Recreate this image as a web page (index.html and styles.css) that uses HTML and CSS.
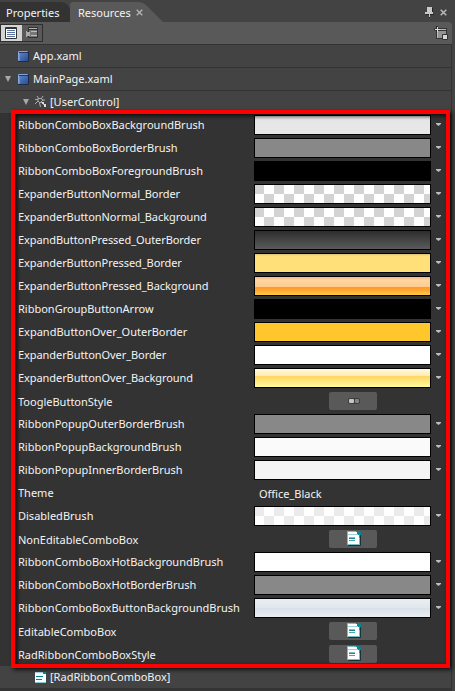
FILE: index.html
```
<!DOCTYPE html>
<html lang="en">
<head>
<meta charset="utf-8">
<title>Resources</title>
<link rel="stylesheet" href="styles.css">
</head>
<body>
<svg class="defs" width="0" height="0">
  <defs>
    <linearGradient id="blue" x2="1" y2="1"><stop stop-color="#5b82c6"/><stop offset="1" stop-color="#294d96"/></linearGradient>
    <symbol id="doc" viewBox="0 0 11 11"><rect width="11" height="11" rx="1" fill="#1d2b47"/><rect width="10" height="10" rx="1" fill="#86a5d8"/><rect x="1" y="1" width="9" height="1" fill="#20365f"/><rect x="1" y="2" width="9" height="8" fill="url(#blue)"/><rect x="1" y="2" width="1" height="8" fill="#6c91d1"/></symbol>
    <symbol id="control" viewBox="0 0 15 15"><rect x="1" y="1" width="13" height="14" rx="1" fill="#12343b"/><rect width="13" height="14" fill="#79bcc5"/><rect x="1" y="1" width="11" height="12" fill="#fff"/><rect x="9" width="4" height="1" fill="#078593"/><rect x="10" y="1" width="4" height="3" fill="#078593"/><rect x="12" y="3" width="1" height="4" fill="#2998a4"/><rect x="1" y="3" width="10" height="1" fill="#9fd0d5"/><rect x="2" y="6" width="6" height="1" fill="#80bdc4"/><rect x="2" y="7" width="6" height="1" fill="#178996"/><rect x="2" y="9" width="6" height="1" fill="#4aa5af"/></symbol>
  </defs>
</svg>
<div class="panel">
  <header class="tabs">
    <div class="tab tab-back"><span>Properties</span></div>
    <div class="tab tab-front">
      <svg class="tab-shape" width="93" height="22" viewBox="0 0 93 22"><path d="M0 22V5Q0 2 3 2H68Q73 2 77 6L93 22z" fill="#595959"/></svg>
      <span>Resources</span>
      <svg class="close" width="7" height="7" viewBox="0 0 7 7"><path d="M.7.7l5.600 5.600M6.300.7L.7 6.300" stroke="#b5b5b5" stroke-width="1.300"/></svg>
    </div>
    <div class="window-tools">
      <svg width="9" height="11" viewBox="0 0 9 11"><path d="M2 1h6v6h1v1H5v3H4V8H1V7h1z" fill="#242424"/><path d="M2 0h5v5h1v2H5v3H4V7H0V5h2z" fill="#c9c9c9"/></svg>
      <svg width="7" height="7" viewBox="0 0 7 7"><path d="M.7.7l5.600 5.600M6.300.7L.7 6.300" stroke="#b9b9b9" stroke-width="1.500"/></svg>
    </div>
  </header>
  <div class="toolbar">
    <div class="modes">
      <div class="mode selected"><svg width="12" height="12" viewBox="0 0 12 12"><rect width="12" height="12" rx="1" fill="#333"/><rect x="1" y="2" width="10" height="9" fill="#fff"/><path d="M2 3.500h8M2 5.500h8M2 7.500h8M2 9.500h8" stroke="#5870a0"/></svg></div>
      <div class="mode"><svg width="12" height="12" viewBox="0 0 12 12"><rect x="2" width="10" height="11" rx="1" fill="#303030"/><rect x="3" y="1" width="8" height="1" fill="#b7b7b7"/><rect x="3" y="3" width="8" height="7" fill="#777"/><rect x="5" y="4" width="6" height="1" fill="#bbb"/><rect x="5" y="8" width="6" height="1" fill="#bbb"/><rect y="4" width="1" height="6" fill="#aaa"/><rect x="1" y="5" width="3" height="4" fill="#aaa"/></svg></div>
    </div>
    <svg class="add" width="14" height="14" viewBox="0 0 14 14"><path d="M2 2h11v11H2z" fill="#343434"/><path d="M3 5h9v7H3z" fill="#949494"/><path d="M6 3.500h6M3.500 6v6" stroke="#bbb"/><path d="M3 0v6M0 3.500h6" stroke="#292929" stroke-width="2"/><path d="M3.500 1v5M1 3.500h5" stroke="#e0e0e0"/><path d="M8.500 8.500h5v5h-5z" fill="#d6d6d6" stroke="#333"/></svg>
  </div>
  <main class="tree">
    <div class="node level-one"><span class="arrow"></span><svg class="doc" width="11" height="11"><use href="#doc"/></svg><span class="caption">App.xaml</span></div>
    <div class="node level-one"><span class="arrow open"></span><svg class="doc" width="11" height="11"><use href="#doc"/></svg><span class="caption">MainPage.xaml</span></div>
    <div class="node level-two"><span class="arrow open"></span><svg class="usericon" width="12" height="12" viewBox="0 0 12 12"><path d="M3 2.500L6 2.500 8 4 5 7 3 5zM2 0l2 3M0 3.500h3M0 8l3-3M8 0L6 3M6 6l4 4M4.500 7l1 4M8 4h2" fill="none" stroke="#ababab"/><path d="M7 6h2v2H7zM9 8h2v3H9z" fill="#ddd"/></svg><span class="caption">[UserControl]</span></div>
    <div class="resources">
      <div class="row"><span class="label">RibbonComboBoxBackgroundBrush</span><i class="swatch light"></i><b class="drop"></b></div>
      <div class="row"><span class="label">RibbonComboBoxBorderBrush</span><i class="swatch gray"></i><b class="drop"></b></div>
      <div class="row"><span class="label">RibbonComboBoxForegroundBrush</span><i class="swatch black"></i><b class="drop"></b></div>
      <div class="row"><span class="label tight">ExpanderButtonNormal_Border</span><i class="swatch checks"></i><b class="drop"></b></div>
      <div class="row"><span class="label tight">ExpanderButtonNormal_Background</span><i class="swatch checks"></i><b class="drop"></b></div>
      <div class="row"><span class="label tight">ExpandButtonPressed_OuterBorder</span><i class="swatch dark"></i><b class="drop"></b></div>
      <div class="row"><span class="label tight">ExpanderButtonPressed_Border</span><i class="swatch yellow"></i><b class="drop"></b></div>
      <div class="row"><span class="label tight">ExpanderButtonPressed_Background</span><i class="swatch orange"></i><b class="drop"></b></div>
      <div class="row"><span class="label">RibbonGroupButtonArrow</span><i class="swatch black"></i><b class="drop"></b></div>
      <div class="row"><span class="label">ExpandButtonOver_OuterBorder</span><i class="swatch gold"></i><b class="drop"></b></div>
      <div class="row"><span class="label tight">ExpanderButtonOver_Border</span><i class="swatch white"></i><b class="drop"></b></div>
      <div class="row"><span class="label tight">ExpanderButtonOver_Background</span><i class="swatch over"></i><b class="drop"></b></div>
      <div class="row style-row"><span class="label">ToogleButtonStyle</span><div class="button toggle"><svg width="14" height="8" viewBox="0 0 14 8"><rect x="1" y="1" width="12" height="6" rx="2" fill="#3e3e3e"/><rect x="2" y="2" width="5" height="4" rx="1" fill="#c5c5c5"/><rect x="8" y="2" width="4" height="4" rx="1" fill="#858585"/></svg></div></div>
      <div class="row"><span class="label">RibbonPopupOuterBorderBrush</span><i class="swatch gray"></i><b class="drop"></b></div>
      <div class="row"><span class="label">RibbonPopupBackgroundBrush</span><i class="swatch near"></i><b class="drop"></b></div>
      <div class="row"><span class="label">RibbonPopupInnerBorderBrush</span><i class="swatch pale"></i><b class="drop"></b></div>
      <div class="row"><span class="label">Theme</span><span class="value">Office_Black</span></div>
      <div class="row"><span class="label">DisabledBrush</span><i class="swatch checks faint"></i><b class="drop"></b></div>
      <div class="row style-row"><span class="label">NonEditableComboBox</span><div class="button"><svg width="15" height="15"><use href="#control"/></svg></div></div>
      <div class="row"><span class="label">RibbonComboBoxHotBackgroundBrush</span><i class="swatch white"></i><b class="drop"></b></div>
      <div class="row"><span class="label">RibbonComboBoxHotBorderBrush</span><i class="swatch gray"></i><b class="drop"></b></div>
      <div class="row"><span class="label">RibbonComboBoxButtonBackgroundBrush</span><i class="swatch steel"></i><b class="drop"></b></div>
      <div class="row style-row"><span class="label">EditableComboBox</span><div class="button"><svg width="15" height="15"><use href="#control"/></svg></div></div>
      <div class="row style-row"><span class="label">RadRibbonComboBoxStyle</span><div class="button"><svg width="15" height="15"><use href="#control"/></svg></div></div>
      <div class="highlight"></div>
    </div>
    <div class="node level-two"><span class="arrow"></span><svg class="radicon" width="11" height="11" viewBox="0 0 11 11"><rect width="11" height="11" fill="#f4ffff"/><rect width="8" height="1" fill="#b5dde1"/><rect x="8" width="3" height="2" fill="#078b98"/><rect x="1" y="4" width="7" height="1" fill="#087f8c"/><rect x="1" y="7" width="6" height="1" fill="#087f8c"/><rect y="10" width="11" height="1" fill="#8bc8cf"/></svg><span class="caption">[RadRibbonComboBox]</span></div>
  </main>
</div>
</body>
</html>
```

FILE: styles.css
```
* { box-sizing: border-box; }
body { margin: 0; background: #434343; color: #f3f3f3; font: 11px/18px "Noto Sans", "Open Sans", sans-serif; overflow: hidden; }
.defs { position: absolute; }
svg { display: block; flex: none; }
.panel { width: 455px; height: 691px; background: #434343; display: flex; flex-direction: column; }
.tabs { height: 22px; display: flex; flex: none; }
.tab { position: relative; white-space: nowrap; }
.tab-back { width: 70px; height: 20px; margin-top: 2px; padding: 2px 0 0 6px; background: #333; border-radius: 0 9px 0 0; }
.tab-front { width: 93px; display: flex; padding: 4px 0 0 8px; }
.tab-front span { position: relative; width: 58px; }
.tab-shape { position: absolute; left: 0; top: 0; }
.close { position: relative; margin-top: 5px; }
.window-tools { margin-left: auto; padding: 7px 8px 0 0; display: flex; gap: 6px; }
.window-tools svg + svg { margin-top: 2px; }
.toolbar { width: 452px; height: 22px; flex: none; padding-top: 2px; background: #595959; border-radius: 0 4px 0 0; display: flex; justify-content: space-between; }
.modes { width: 43px; height: 18px; border: 1px solid #2f2f2f; display: flex; }
.mode { flex: 1; display: flex; align-items: center; justify-content: center; }
.selected { background: #d4d4d4; }
.add { margin: 2px 4px 0 0; }
.tree { width: 452px; flex: 1; background: #353535; border-top: 1px solid #333; border-right: 1px solid #333; }
.node { height: 23px; background: #434343; border-bottom: 1px solid #333; display: flex; align-items: center; }
.level-one { padding-left: 5px; }
.level-two { padding-left: 23px; }
.arrow { width: 6px; height: 6px; flex: none; }
.open { background: #a8a8a8; clip-path: polygon(0 0, 100% 0, 50% 100%); }
.doc { margin: 0 4px 0 7px; }
.usericon { margin: 0 3px 0 6px; }
.radicon { margin: 0 4px 0 6px; }
.caption { white-space: nowrap; }
.resources { position: relative; background: #333; }
.row { height: 23px; padding-left: 18px; display: grid; grid-template-columns: 236px 177px 1fr; align-items: start; }
.label { white-space: nowrap; padding-top: 2px; }
.tight { letter-spacing: -0.07px; }
.style-row .label { padding-top: 3px; }
.value { padding: 3px 0 0 5px; }
.swatch { height: 20px; margin-top: 1px; border: 1px solid #000; }
.drop { width: 5px; height: 3px; margin: 9px 0 0 5px; background: #bdbdbd; clip-path: polygon(0 0, 100% 0, 100% 34%, 50% 100%, 0 34%); }
.button { width: 48px; height: 18px; margin: 2px 0 0 75px; padding: 1px 0 0 18px; background: #595959; border-radius: 2px; }
.toggle { padding-top: 5px; }
.light { background: linear-gradient(#ccc, #e7e7e7 3px); }
.gray { background: #888; }
.black { background: #000; }
.checks { background: repeating-conic-gradient(#fff 0 25%, #d3d3d3 0 50%) -1px -1px / 20px 20px; }
.faint { background-image: repeating-conic-gradient(#fff 0 25%, #ebebeb 0 50%); }
.dark { background: linear-gradient(#2d2d2d, #5b5b5b); }
.yellow { background: linear-gradient(#d8bf70, #ffe079 2px); }
.orange { background: linear-gradient(#f6b881, #ffd5a4 3px, #ffcc8c 10px, #ff982e 10px, #ffa52f 13px, #ffcb46); }
.gold { background: #ffc72c; }
.white { background: #fff; }
.over { background: linear-gradient(#fffbd8, #ffebb3 7px, #ffd562 7px, #fffb9e); }
.near { background: #fafafa; }
.pale { background: #f4f4f4; }
.steel { background: linear-gradient(#e9eef4, #e2e7ee 9px, #dae0e8 9px, #e7edf2); }
.highlight { position: absolute; left: 11px; top: -4px; width: 439px; height: 558px; border: 4px solid #f00; box-shadow: 2px 2px 4px #000b, inset 2px 2px 4px #000b; }
```
